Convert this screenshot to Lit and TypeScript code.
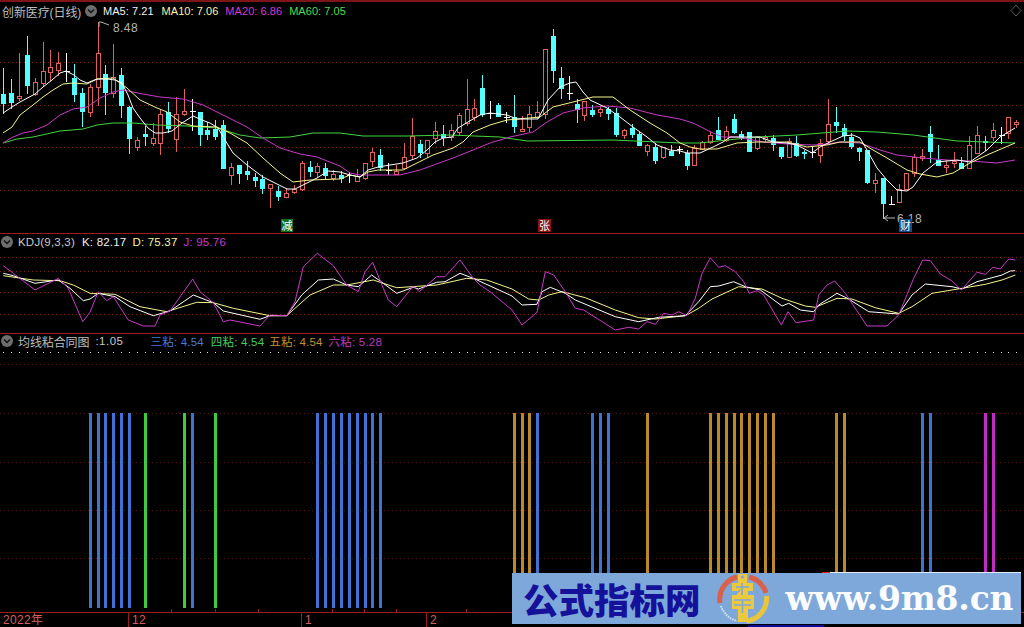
import { LitElement, html, svg, css } from "lit";
import { customElement } from "lit/decorators.js";

type C = [number, number, number, number, string];
// hi, bodyTop, bodyBottom, lo, kind
const CANDLES: C[] = [
[68,94,103,113,"c"],[79,93,102,108,"c"],[53,96,98,100,"r"],[36,55,85,93,"c"],[78,82,94,95,"r"],[42,71,83,86,"r"],[50,67,72,80,"r"],[52,63,70,75,"r"],[53,71,71,81,"w"],[64,78,94,101,"c"],
[88,93,111,126,"c"],[84,87,112,116,"r"],[22,53,87,105,"r"],[65,74,92,114,"c"],[44,77,93,97,"r"],[68,75,105,117,"c"],[106,107,138,153,"c"],[137,140,147,150,"r"],[126,134,136,145,"c"],[123,138,143,145,"r"],
[110,114,143,154,"r"],[102,112,128,132,"c"],[97,114,139,151,"r"],[89,111,114,115,"r"],[99,111,111,130,"w"],[112,112,134,145,"c"],[122,130,134,139,"c"],[120,129,136,139,"c"],[120,125,168,168,"c"],[163,167,175,184,"r"],
[165,165,173,183,"c"],[161,171,174,179,"c"],[173,177,180,186,"c"],[175,179,188,193,"c"],[184,184,188,207,"r"],[186,191,196,200,"c"],[188,193,197,197,"r"],[185,189,192,193,"r"],[161,163,189,190,"r"],[161,167,171,176,"c"],
[163,166,172,177,"r"],[163,168,175,178,"c"],[170,174,178,180,"r"],[171,175,178,182,"c"],[172,175,175,182,"w"],[169,176,181,181,"r"],[163,163,178,179,"r"],[148,152,161,166,"r"],[149,155,167,170,"c"],[163,170,170,174,"w"],
[165,171,174,174,"r"],[143,157,168,168,"r"],[118,136,155,158,"r"],[140,144,152,157,"c"],[140,140,153,157,"r"],[122,131,138,143,"r"],[125,134,137,145,"c"],[124,130,137,140,"r"],[113,115,132,135,"r"],[79,109,123,125,"r"],
[99,108,117,120,"r"],[75,88,114,116,"c"],[101,113,113,118,"w"],[103,105,116,116,"c"],[112,117,117,122,"w"],[95,117,126,132,"c"],[116,129,131,131,"r"],[106,114,127,131,"r"],[101,112,117,118,"r"],[49,49,114,118,"r"],
[29,36,70,82,"c"],[67,78,88,98,"c"],[76,93,93,99,"w"],[99,104,109,122,"c"],[101,101,115,120,"r"],[105,110,114,116,"c"],[107,109,112,116,"r"],[107,109,113,119,"c"],[108,113,134,136,"c"],[129,130,135,138,"r"],
[124,128,134,137,"c"],[132,134,145,145,"c"],[144,145,151,155,"r"],[143,147,160,163,"c"],[147,147,157,158,"r"],[145,151,155,155,"c"],[146,149,149,153,"w"],[150,153,165,169,"c"],[145,148,165,165,"r"],[141,142,149,149,"r"],
[131,135,142,143,"r"],[117,130,139,139,"c"],[126,131,140,141,"r"],[114,119,132,133,"c"],[131,134,137,139,"c"],[132,132,151,151,"c"],[136,137,148,149,"r"],[135,137,139,142,"r"],[135,138,144,150,"c"],[147,147,156,158,"c"],
[138,141,157,157,"r"],[136,143,155,156,"c"],[150,152,153,158,"c"],[146,152,152,157,"w"],[139,143,155,162,"r"],[99,124,141,143,"r"],[107,122,125,132,"c"],[124,128,135,140,"c"],[133,137,146,148,"c"],[147,148,151,160,"c"],
[150,150,182,183,"c"],[173,180,183,192,"r"],[178,178,203,218,"c"],[196,204,204,204,"w"],[184,189,202,202,"r"],[173,173,189,189,"r"],[154,157,173,176,"r"],[149,156,158,160,"r"],[126,134,151,162,"c"],[145,160,165,165,"c"],
[160,165,167,172,"r"],[152,161,163,167,"r"],[157,163,168,168,"c"],[136,145,168,168,"r"],[126,135,153,153,"r"],[136,141,142,150,"c"],[123,130,137,140,"r"],[127,135,135,143,"w"],[117,117,133,138,"r"],[120,122,124,127,"r"],
];

const MA5 = "3,113 12,107 20,102 35,94 43,87 52,80 60,73 66,71 74,75 80,80 87,83 97,79 107,79 115,80 122,83 128,95 133,108 140,118 148,128 155,133 163,133 172,131 182,123 193,116 202,120 210,123 218,128 225,140 233,153 247,165 263,177 277,184 287,189 295,189 305,184 317,178 328,171 340,172 350,175 360,177 368,170 378,167 390,165 403,163 417,158 427,150 435,142 443,138 452,137 458,128 468,122 480,115 490,113 507,115 517,119 538,119 548,100 560,87 570,83 576,82 583,92 590,100 607,108 620,117 633,127 647,137 657,145 670,150 680,151 687,153 700,153 713,147 723,142 730,137 747,137 760,137 773,142 787,143 797,145 812,153 820,147 830,142 843,136 853,135 860,138 867,150 877,168 887,180 897,190 907,191 913,187 923,173 937,162 957,160 970,162 987,150 1000,137 1015,128";
const MA10 = "3,133 12,127 20,115 33,105 43,97 53,90 63,84 73,83 87,84 97,79 113,78 127,88 140,100 157,108 167,112 180,122 193,126 217,127 230,133 247,143 263,158 280,173 293,182 310,180 340,179 350,175 360,177 368,172 378,170 403,170 417,163 433,155 453,148 463,142 473,132 490,125 507,120 540,117 553,107 573,102 593,97 613,97 630,110 650,123 667,133 680,143 690,147 700,149 717,149 737,143 757,142 787,142 807,147 827,145 840,142 860,142 873,150 887,158 907,170 920,174 937,177 953,173 970,163 987,155 1015,143";
const MA20 = "3,143 13,137 23,133 33,131 47,125 60,115 73,109 87,107 100,98 113,92 123,90 143,94 160,97 183,99 203,105 227,117 247,127 263,138 280,148 300,154 317,157 340,166 350,173 360,175 400,175 420,170 453,158 473,150 490,143 510,137 533,132 547,122 563,113 583,108 607,106 630,108 657,115 680,119 693,123 703,128 713,133 723,137 737,137 763,142 787,144 813,145 827,144 840,142 860,143 880,150 897,155 923,158 947,160 970,161 997,163 1015,160";
const MA60 = "3,143 17,139 33,137 60,131 83,129 97,125 113,123 133,123 157,125 187,126 217,128 240,135 260,138 290,137 313,133 340,133 363,136 407,136 450,135 500,137 527,141 613,140 680,143 700,143 727,140 757,137 797,135 847,131 877,132 913,135 957,141 1015,143";

const L = (a: number[][]) => a.map(([x, y]) => `${(x / 3).toFixed(1)},${(225 + y / 3).toFixed(1)}`).join(" ");
const R = (a: number[][]) => a.map(([x, y]) => `${(512 + x / 3).toFixed(1)},${(225 + y / 3).toFixed(1)}`).join(" ");
const K = L([[10,145],[40,152],[105,175],[175,165],[210,190],[250,227],[270,222],[295,205],[345,215],[390,245],[460,272],[510,258],[580,210],[640,233],[670,258],[780,283],[810,272],[860,272],[905,210],[955,165],[1000,162],[1040,180],[1075,185],[1115,150],[1150,175],[1190,205],[1240,187],[1255,192],[1310,172],[1335,170],[1380,145],[1420,160],[1536,213]]) + " " +
  R([[30,240],[75,238],[90,200],[115,187],[160,205],[190,225],[310,275],[380,290],[440,277],[520,272],[560,230],[595,185],[620,183],[665,170],[700,185],[745,195],[810,243],[830,235],[865,255],[905,260],[920,240],[975,205],[1010,222],[1070,260],[1160,267],[1200,210],[1240,177],[1320,185],[1350,192],[1395,170],[1440,158],[1470,150],[1495,138],[1510,137]]);
const D = L([[10,152],[100,165],[180,167],[220,180],[270,205],[345,208],[420,245],[500,260],[590,232],[640,233],[700,250],[810,272],[860,272],[930,210],[1000,180],[1040,180],[1120,165],[1190,188],[1310,180],[1400,160],[1460,165],[1536,192]]) + " " +
  R([[50,222],[80,225],[110,210],[150,200],[220,218],[310,255],[380,278],[430,282],[520,272],[560,250],[600,222],[680,185],[750,192],[810,220],[880,243],[910,247],[975,220],[1020,222],[1090,248],[1160,265],[1200,245],[1260,205],[1350,190],[1420,178],[1470,165],[1510,150]]);
const J = L([[10,122],[40,145],[105,195],[175,160],[205,190],[248,290],[270,262],[295,200],[320,227],[340,215],[385,285],[430,303],[465,303],[480,270],[510,258],[578,162],[600,200],[640,233],[670,290],[690,285],[780,303],[810,270],[860,272],[885,230],[910,125],[952,85],[1000,122],[1040,180],[1075,200],[1095,140],[1118,112],[1150,190],[1165,225],[1190,245],[1240,183],[1258,200],[1310,155],[1335,155],[1380,105],[1420,160],[1440,180],[1470,200],[1536,255]]) + " " +
  R([[30,300],[75,262],[100,140],[125,150],[160,200],[190,250],[215,255],[310,315],[350,307],[380,312],[405,290],[430,298],[455,265],[480,270],[500,260],[525,272],[550,220],[570,145],[595,98],[620,127],[640,122],[670,140],[695,170],[712,205],[735,197],[755,210],[808,300],[828,260],[852,293],[905,285],[920,210],[945,180],[968,168],[1000,205],[1065,303],[1125,303],[1160,270],[1205,160],[1232,105],[1255,107],[1285,147],[1320,168],[1348,195],[1395,142],[1420,148],[1443,127],[1465,132],[1490,102],[1510,105]]);

const BLUE = "#3f72d2", GREEN = "#3ecb3e", GOLD = "#bb8a28", MAG = "#c42bc4";
const BARS: [number, string][] = [
  ...[11,12,13,14,15,16].map((i) => [i, BLUE] as [number, string]),
  [18, GREEN],[23, GREEN],[24, BLUE],[27, GREEN],
  ...[40,41,42,43,44,45,46,47,48].map((i) => [i, BLUE] as [number, string]),
  [65, GOLD],[66, GOLD],[67, GOLD],[68, BLUE],
  [75, BLUE],[76, BLUE],[77, BLUE],[82, GOLD],
  ...[90,91,92,93,94,95,96,97,98].map((i) => [i, GOLD] as [number, string]),
  [106, GOLD],[107, GOLD],[117, BLUE],[118, BLUE],[125, MAG],[126, MAG],
];

const cx = (i: number) => Math.round(3.3 + 7.853 * i);

function candle(c: C, i: number) {
  const [hi, top, bot, lo, kind] = c;
  const x = cx(i) + 0.5;
  const stroke = kind === "c" ? "#54ffff" : kind === "w" ? "#ffffff" : "#e0605a";
  const wick = svg`<line x1=${x} x2=${x} y1=${hi} y2=${lo + 1} stroke=${stroke}></line>`;
  if (kind === "w") return svg`${wick}<line x1=${x - 3} x2=${x + 3} y1=${top + 0.5} y2=${top + 0.5} stroke=${stroke}></line>`;
  if (kind === "c") return svg`${wick}<rect x=${x - 2.5} y=${top} width="5" height=${Math.max(bot - top, 1) + 1} fill=${stroke}></rect>`;
  return svg`${wick}<rect x=${x - 2} y=${top + 0.5} width="4" height=${Math.max(bot - top, 1)} fill="#000" stroke=${stroke}></rect>`;
}

const grid = (ys: number[], cls = "dots") => ys.map((y) => svg`<line x1="0" x2="1024" y1=${y + 0.5} y2=${y + 0.5} class=${cls}></line>`);
const chevron = svg`<svg class="chev" viewBox="0 0 12 12" width="12" height="12"><circle cx="6" cy="6" r="6" fill="#6e6e6e"></circle><path d="M3 4.6 L6 7.6 L9 4.6" fill="none" stroke="#111" stroke-width="1.4"></path></svg>`;

@customElement("app-root")
export class AppRoot extends LitElement {
  static styles = css`
    :host { display: block; width: 1024px; height: 627px; background: #000; overflow: hidden;
      font-family: "Liberation Sans", "Noto Sans CJK SC", sans-serif; font-size: 12px; color: #c8c8c8; }
    .pane { display: grid; border-bottom: 1px solid #9c1c20; box-sizing: border-box; }
    .pane > * { grid-area: 1 / 1; min-width: 0; }
    .main { height: 234px; border-top: 2px solid #7d1418; }
    .kdj { height: 100px; }
    .stick { height: 279px; }
    svg { display: block; }
    .plot { width: 1024px; overflow: visible; }
    .dots { stroke: #7e2018; stroke-width: 1; stroke-dasharray: 1 3; }
    .dim { stroke: #561a14; stroke-width: 1; stroke-dasharray: 1 3; }
    .head { display: flex; align-items: center; height: 14px; white-space: nowrap; z-index: 1; align-self: start; }
    .main .head { margin-top: 2px; padding-left: 2px; }
    .kdj .head { margin-top: 1px; padding-left: 1px; }
    .stick .head { margin-top: 0; padding-left: 1px; }
    .name { font-size: 12px; color: #bdbdbd; letter-spacing: -0.1px; }
    .main .name { width: 83px; flex: none; }
    .chev { margin: 0 6px 0 0; flex: none; }
    .kdj .chev, .stick .chev { margin: 0 5px 0 0; }
    .v { font-size: 11.5px; letter-spacing: 0.2px; }
    .m { font-size: 11px; letter-spacing: 0.05px; }
    .ma5 { color: #f2f2f2; margin-right: 8px; }
    .ma10 { color: #f7f79c; margin-right: 7px; }
    .ma20 { color: #d43bd4; margin-right: 7px; }
    .ma60 { color: #4fdc4f; }
    .kv { color: #f0f0f0; margin-left: 7px; }
    .dv { color: #f5f59a; margin-left: 6px; }
    .jv { color: #c83ac8; margin-left: 6px; }
    .lbl { color: #c8c8c8; font-size: 11.5px; letter-spacing: 0.2px; }
    .ratio { margin-left: 6px; letter-spacing: 0.5px; }
    .s3 { color: #4a78d6; margin-left: 27px; }
    .s4 { color: #46cc5a; margin-left: 7px; }
    .s5 { color: #c1902e; margin-left: 5px; }
    .s6 { color: #b83cc0; margin-left: 6px; }
    .t-grey { fill: #b4b4b4; font-size: 12px; letter-spacing: 0.4px; font-family: "Liberation Sans", sans-serif; }
    .tag { fill: #fff; font-size: 11px; font-family: "Noto Sans CJK SC", sans-serif; text-anchor: middle; }
    .axis { display: flex; height: 14px; position: relative; color: #d75f5f; font-size: 12px; line-height: 14px; }
    .tick-label { display: block; flex: none; box-sizing: border-box; padding-left: 3px; border-left: 1px solid #9c1c20; height: 14px; letter-spacing: 0.3px; }
    .first { width: 128px; border-left: none; }
    .second { width: 173px; }
    .third { width: 125px; }
    .fourth { width: 160px; }
    .mark { position: absolute; left: 512px; top: -40px; width: 509px; height: 51px; background: #7ea8d9;
      display: flex; align-items: center; overflow: hidden; }
    .edge { position: absolute; left: 830px; top: -41px; width: 191px; height: 1px; background: #e4ebf5; }
    .red { position: absolute; left: 822px; top: -41px; width: 8px; height: 2px; background: #d5321e; }
    .cn { font-family: "Noto Sans CJK SC", sans-serif; font-weight: 900; font-size: 35.5px; line-height: 51px; color: #15119a; margin-left: 11px; }
    .logo { margin-left: 16px; flex: none; }
    .url { font-family: "DejaVu Serif", serif; font-weight: 700; font-size: 33px; line-height: 51px; color: #fafcff; margin-left: 17px; letter-spacing: -0.2px; }
    .strip { position: absolute; left: 748px; top: 12px; width: 76px; height: 2px; background: #0a0a9a; }
  `;

  render() {
    return html`
      <section class="pane main">
        <svg class="plot" width="1024" height="231" viewBox="0 2 1024 231" shape-rendering="crispEdges">
          ${grid([62, 105, 147, 190])}
          ${CANDLES.map(candle)}
          <g fill="none" stroke-width="1" shape-rendering="auto">
            <polyline points=${MA60} stroke="#41d641"></polyline>
            <polyline points=${MA20} stroke="#c93ac9"></polyline>
            <polyline points=${MA10} stroke="#f5f58c"></polyline>
            <polyline points=${MA5} stroke="#ffffff"></polyline>
          </g>
          <g shape-rendering="auto">
            <path d="M99 27 V22 H101 L109 25" fill="none" stroke="#b4b4b4"></path>
            <text class="t-grey" x="113" y="32">8.48</text>
            <path d="M883 218 H895 M884 218 L888 215 M884 218 L888 221" fill="none" stroke="#b4b4b4"></path>
            <text class="t-grey" x="897" y="223">6.18</text>
            <path d="M1016 5 L1021 10.5 L1016 16 L1011 10.5 Z" fill="none" stroke="#5a5a5a"></path>
          </g>
          <rect x="281" y="219" width="12" height="13" fill="#0f6e1a"></rect>
          <rect x="538" y="219" width="13" height="13" fill="#8a1216"></rect>
          <rect x="899" y="219" width="13" height="13" fill="#174a84"></rect>
          <g shape-rendering="auto">
            <text class="tag" x="287" y="230">减</text>
            <text class="tag" x="544.5" y="230">张</text>
            <text class="tag" x="905.5" y="230">财</text>
          </g>
        </svg>
        <div class="head">
          <span class="name">创新医疗(日线)</span>${chevron}
          <span class="m ma5">MA5: 7.21</span>
          <span class="m ma10">MA10: 7.06</span>
          <span class="m ma20">MA20: 6.86</span>
          <span class="m ma60">MA60: 7.05</span>
        </div>
      </section>
      <section class="pane kdj">
        <svg class="plot" width="1024" height="99" viewBox="0 234 1024 99">
          <g shape-rendering="crispEdges">${grid([257, 271, 292, 314])}</g>
          <g fill="none">
            <polyline points=${D} stroke="#f5f58c"></polyline>
            <polyline points=${K} stroke="#ffffff"></polyline>
            <polyline points=${J} stroke="#c93ac9"></polyline>
          </g>
        </svg>
        <div class="head">
          ${chevron}
          <span class="lbl">KDJ(9,3,3)</span>
          <span class="v kv">K: 82.17</span>
          <span class="v dv">D: 75.37</span>
          <span class="v jv">J: 95.76</span>
        </div>
      </section>
      <section class="pane stick">
        <svg class="plot" width="1024" height="278" viewBox="0 334 1024 278" shape-rendering="crispEdges">
          ${grid([364, 413, 462, 510, 558], "dim")}
          ${CANDLES.map((_, i) => svg`<rect x=${cx(i)} y="352" width="1" height="1" fill="#e8e8e8"></rect>`)}
          ${BARS.map(([i, c]) => svg`<rect x=${cx(i) - 1} y="413" width="3" height="195" fill=${c}></rect>`)}
          ${[171, 215, 258, 332, 364, 396, 466, 586, 748, 900].map((x) => svg`<rect x=${x} y="609" width="1" height="3" fill="#9c1c20"></rect>`)}
        </svg>
        <div class="head">
          ${chevron}
          <span class="name">均线粘合同图</span>
          <span class="lbl ratio">:1.05</span>
          <span class="v s3">三粘: 4.54</span>
          <span class="v s4">四粘: 4.54</span>
          <span class="v s5">五粘: 4.54</span>
          <span class="v s6">六粘: 5.28</span>
        </div>
      </section>
      <footer class="axis">
        <span class="tick-label first">2022年</span>
        <span class="tick-label second">12</span>
        <span class="tick-label third">1</span>
        <span class="tick-label fourth">2</span>
        <span class="strip"></span>
        <span class="edge"></span>
        <span class="red"></span>
        <div class="mark">
          <span class="cn">公式指标网</span>
          <svg class="logo" width="52" height="51" viewBox="0 0 52 51">
            <path d="M3 30 A23 23 0 0 1 20 4" fill="none" stroke="#d9604a" stroke-width="5"></path>
            <path d="M32 4 A23 23 0 0 1 49 20" fill="none" stroke="#d9604a" stroke-width="5"></path>
            <path d="M49.5 23 A23 23 0 0 1 30 48" fill="none" stroke="#e8c53c" stroke-width="5"></path>
            <path d="M4 33 A23 23 0 0 0 20 48" fill="none" stroke="#d6e4f4" stroke-width="2" stroke-dasharray="1.5 1"></path>
            <path d="M21 1 H30 V10 H36 V18 H31 V22 H37 V36 H31 V49 H21 V36 H15 V22 H20 V18 H15 V10 H21 Z" fill="#ecc83e"></path>
            <circle cx="25.5" cy="4" r="1.8" fill="#7ea8d9"></circle>
            <path d="M19 14 H32 M25 10 V22 M20 20 L23 17 M17 27 H34 M17 32 H34 M25.5 27 V40" stroke="#7ea8d9" stroke-width="1.6" fill="none"></path>
          </svg>
          <span class="url">www.9m8.cn</span>
        </div>
      </footer>
    `;
  }
}
